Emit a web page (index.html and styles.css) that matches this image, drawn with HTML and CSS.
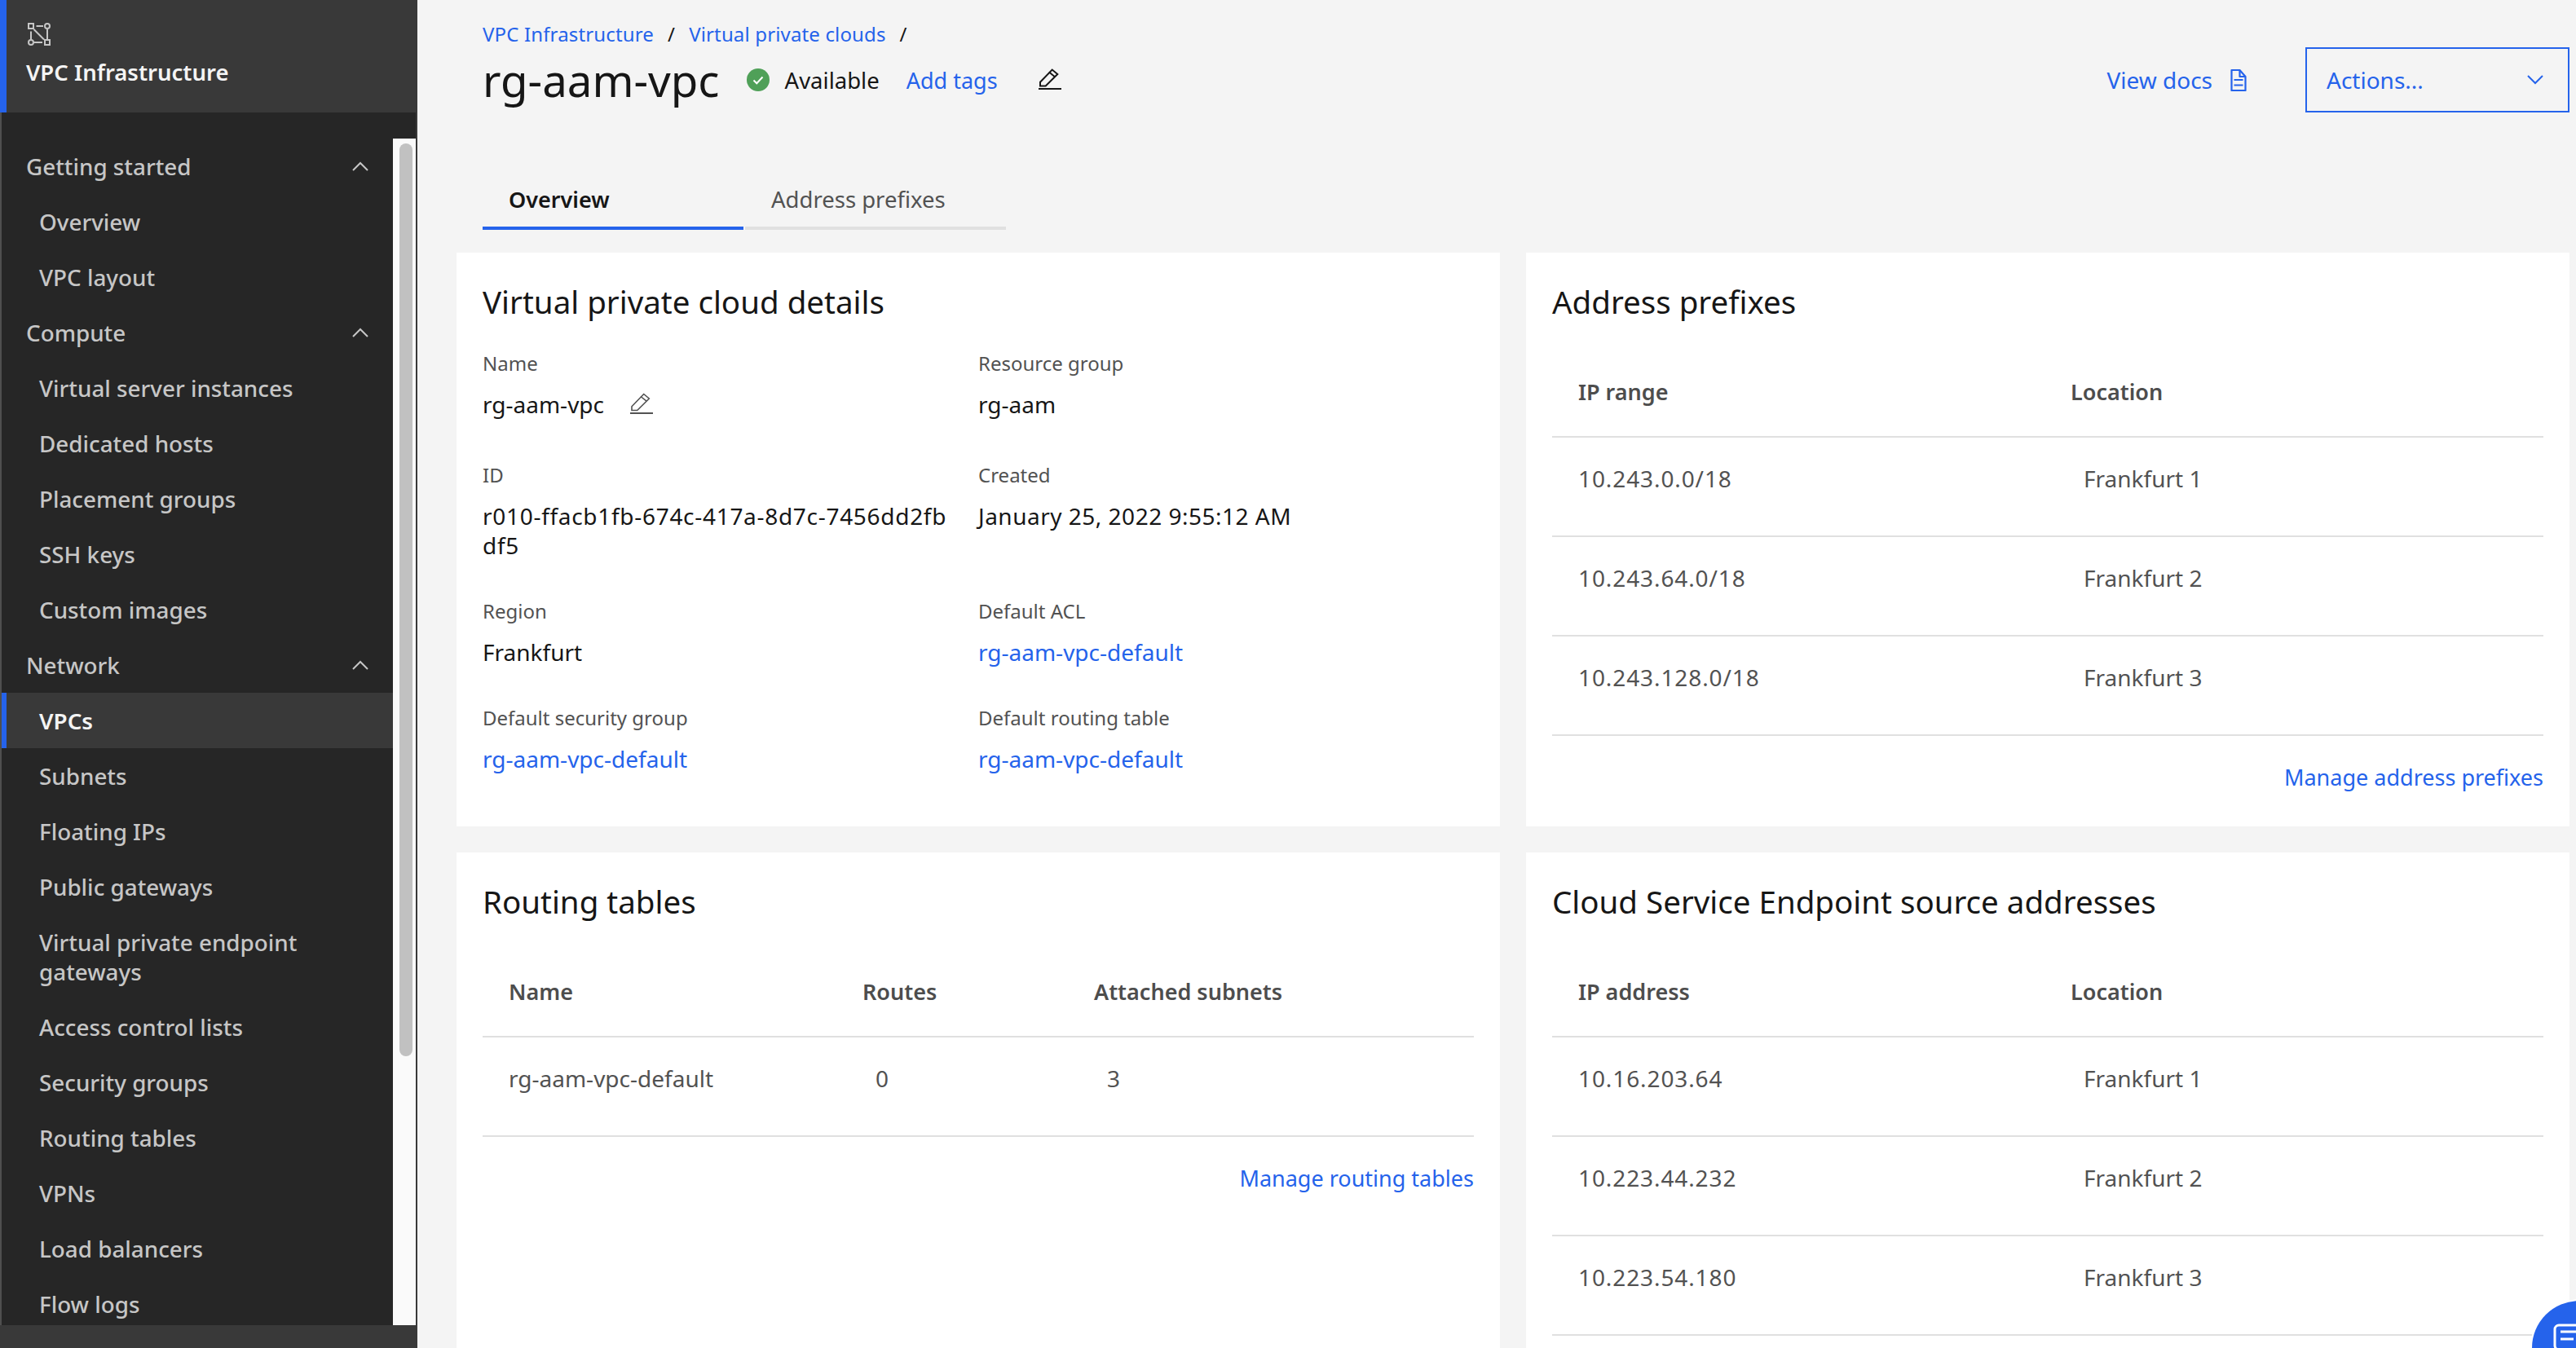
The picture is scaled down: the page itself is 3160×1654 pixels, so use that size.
FILE: index.html
```html
<!DOCTYPE html>
<html lang="en">
<head>
    <meta charset="UTF-8">
    <title>rg-aam-vpc</title>
    <link rel="stylesheet" href="styles.css">
</head>
<body>
    <aside class="sidebar">
        <header class="side-head">
            <svg class="side-logo" viewBox="0 0 28 28" width="28" height="28" fill="none" stroke="#c6c6c6" stroke-width="2">
                <rect x="1" y="1" width="6" height="6"/><rect x="21" y="21" width="6" height="6"/>
                <circle cx="24" cy="4" r="3"/><circle cx="4" cy="24" r="3"/>
                <path d="M10.500 4H19M24 8v12M4 10.500V20M8 24h10M7.500 8L20 20.500"/>
            </svg>
            <div class="side-title">VPC Infrastructure</div>
        </header>
        <div class="side-body">
            <nav class="side-nav">
                <div class="nav-group">Getting started <svg class="chev" viewBox="0 0 20 12" width="20" height="12"><path d="M1 11l9-9 9 9" fill="none" stroke="#c6c6c6" stroke-width="2"/></svg></div>
                <a class="nav-item">Overview</a>
                <a class="nav-item">VPC layout</a>
                <div class="nav-group">Compute <svg class="chev" viewBox="0 0 20 12" width="20" height="12"><path d="M1 11l9-9 9 9" fill="none" stroke="#c6c6c6" stroke-width="2"/></svg></div>
                <a class="nav-item">Virtual server instances</a>
                <a class="nav-item">Dedicated hosts</a>
                <a class="nav-item">Placement groups</a>
                <a class="nav-item">SSH keys</a>
                <a class="nav-item">Custom images</a>
                <div class="nav-group">Network <svg class="chev" viewBox="0 0 20 12" width="20" height="12"><path d="M1 11l9-9 9 9" fill="none" stroke="#c6c6c6" stroke-width="2"/></svg></div>
                <a class="nav-item active">VPCs</a>
                <a class="nav-item">Subnets</a>
                <a class="nav-item">Floating IPs</a>
                <a class="nav-item">Public gateways</a>
                <a class="nav-item">Virtual private endpoint gateways</a>
                <a class="nav-item">Access control lists</a>
                <a class="nav-item">Security groups</a>
                <a class="nav-item">Routing tables</a>
                <a class="nav-item">VPNs</a>
                <a class="nav-item">Load balancers</a>
                <a class="nav-item">Flow logs</a>
            </nav>
            <div class="scroll-track"><div class="scroll-thumb"></div></div>
        </div>
        <div class="side-foot"></div>
    </aside>

    <main class="content">
        <div class="page-head">
            <div>
                <div class="crumbs">
                    <a>VPC Infrastructure</a><span class="sep">/</span><a>Virtual private clouds</a><span class="sep">/</span>
                </div>
                <div class="title-row">
                    <h1>rg-aam-vpc</h1>
                    <svg class="status-icon" viewBox="0 0 28 28" width="28" height="28"><circle cx="14" cy="14" r="14" fill="#4fa058"/><path d="M8.500 14.500l3.800 3.800L19.500 10.500" fill="none" stroke="#fff" stroke-width="2"/></svg>
                    <span class="status-text">Available</span>
                    <a class="add-tags">Add tags</a>
                    <svg class="edit-icon" viewBox="0 0 28 28" width="28" height="28" fill="none" stroke="#161616" stroke-width="2"><path d="M2 21.500V16.700L16.700 1.500l6.600 5.500L8.700 21.500z"/><path d="M13 4.500l7 5.700"/><path d="M0 25h28"/></svg>
                </div>
            </div>
            <div class="head-actions">
                <a class="docs-link">View docs
                    <svg viewBox="0 0 20 28" width="20" height="28" fill="none" stroke="#2563eb" stroke-width="2.200" stroke-linejoin="round"><path d="M1.500 2h10l7 8v17h-17z"/><path d="M11.500 2v8h7M4.500 14h11M4.500 20.500h11"/></svg>
                </a>
                <div class="actions-btn">Actions...
                    <svg viewBox="0 0 20 12" width="20" height="12"><path d="M1 1l9 9 9-9" fill="none" stroke="#2563eb" stroke-width="2"/></svg>
                </div>
            </div>
        </div>

        <div class="tabs">
            <div class="tab selected">Overview</div>
            <div class="tab">Address prefixes</div>
        </div>

        <div class="cards">
            <section class="card">
                <h2>Virtual private cloud details</h2>
                <div class="details">
                    <div class="field"><div class="field-label">Name</div><div class="field-value with-icon">rg-aam-vpc
                        <svg viewBox="0 0 28 28" width="28" height="28" fill="none" stroke="#525252" stroke-width="1.600"><path d="M2 21.500V16.700L16.700 1.500l6.600 5.500L8.700 21.500z"/><path d="M13 4.500l7 5.700"/><path d="M0 25h28" stroke-width="2"/></svg></div></div>
                    <div class="field"><div class="field-label">Resource group</div><div class="field-value with-icon">rg-aam</div></div>
                    <div class="field"><div class="field-label">ID</div><div class="field-value spaced">r010-ffacb1fb-674c-417a-8d7c-7456dd2fb<br>df5</div></div>
                    <div class="field"><div class="field-label">Created</div><div class="field-value spaced-date">January 25, 2022 9:55:12 AM</div></div>
                    <div class="field"><div class="field-label">Region</div><div class="field-value">Frankfurt</div></div>
                    <div class="field"><div class="field-label">Default ACL</div><div class="field-value"><a>rg-aam-vpc-default</a></div></div>
                    <div class="field"><div class="field-label">Default security group</div><div class="field-value"><a>rg-aam-vpc-default</a></div></div>
                    <div class="field"><div class="field-label">Default routing table</div><div class="field-value"><a>rg-aam-vpc-default</a></div></div>
                </div>
            </section>

            <section class="card">
                <h2>Address prefixes</h2>
                <table class="data-table loc-table">
                    <thead><tr><th>IP range</th><th>Location</th></tr></thead>
                    <tbody>
                        <tr><td>10.243.0.0/18</td><td class="inset">Frankfurt 1</td></tr>
                        <tr><td>10.243.64.0/18</td><td class="inset">Frankfurt 2</td></tr>
                        <tr><td>10.243.128.0/18</td><td class="inset">Frankfurt 3</td></tr>
                    </tbody>
                </table>
                <div class="manage"><a>Manage address prefixes</a></div>
            </section>

            <section class="card">
                <h2>Routing tables</h2>
                <table class="data-table routes-table">
                    <thead><tr><th>Name</th><th>Routes</th><th>Attached subnets</th></tr></thead>
                    <tbody>
                        <tr><td>rg-aam-vpc-default</td><td class="inset">0</td><td class="inset">3</td></tr>
                    </tbody>
                </table>
                <div class="manage"><a>Manage routing tables</a></div>
            </section>

            <section class="card">
                <h2>Cloud Service Endpoint source addresses</h2>
                <table class="data-table loc-table">
                    <thead><tr><th>IP address</th><th>Location</th></tr></thead>
                    <tbody>
                        <tr><td>10.16.203.64</td><td class="inset">Frankfurt 1</td></tr>
                        <tr><td>10.223.44.232</td><td class="inset">Frankfurt 2</td></tr>
                        <tr><td>10.223.54.180</td><td class="inset">Frankfurt 3</td></tr>
                    </tbody>
                </table>
            </section>
        </div>
    </main>

    <button class="chat-btn">
        <svg viewBox="0 0 44 44" width="44" height="44" fill="none" stroke="#fff" stroke-width="3"><path d="M7 2h32a5 5 0 0 1 5 5v20a5 5 0 0 1-5 5H26l-4 6-4-6H7a5 5 0 0 1-5-5V7a5 5 0 0 1 5-5z"/><path d="M9 10h28M9 19h16"/></svg>
    </button>
</body>
</html>
```

FILE: styles.css
```css
/* Page */
html {
    height: 100%;
    overflow: hidden;
}

body {
    position: relative;
    margin: 0;
    display: flex;
    height: 1654px;
    overflow: hidden;
    background-color: #f4f4f4;
    color: #161616;
    font-family: "Noto Sans", Roboto, sans-serif;
    font-size: 28px;
}

a {
    color: #2563eb;
    text-decoration: none;
}

/* Sidebar */
.sidebar {
    width: 512px;
    height: 1654px;
    flex: none;
    display: flex;
    flex-direction: column;
    background-color: #262626;
}

.side-head {
    height: 138px;
    flex: none;
    box-sizing: border-box;
    padding: 28px 0 0 26px;
    border-left: 8px solid #2563eb;
    background-color: #393939;
}

.side-logo {
    display: block;
}

.side-title {
    margin: 15px 0 0 -2px;
    color: #f4f4f4;
    font-size: 27.500px;
    font-weight: 600;
    line-height: 36px;
}

.side-body {
    flex: 1;
    min-height: 0;
    display: flex;
    border-left: 2px solid #4f4f4f;
    padding-right: 2px;
    background-color: #393939;
}

.side-nav {
    flex: 1;
    padding-top: 32px;
    overflow: hidden;
    background-color: #262626;
}

.nav-group, .nav-item {
    display: block;
    color: #c6c6c6;
    font-size: 27.800px;
    font-weight: 500;
    line-height: 36px;
    padding: 16px 0;
}

.nav-group {
    padding-left: 30px;
    padding-right: 30px;
    display: flex;
    justify-content: space-between;
    align-items: center;
}

.nav-item {
    padding-left: 46px;
    padding-right: 60px;
}

.nav-item.active {
    background-color: #393939;
    border-left: 6px solid #2563eb;
    padding-left: 40px;
    color: #f4f4f4;
    font-weight: 600;
}

.scroll-track {
    width: 28px;
    flex: none;
    border-top: 32px solid #262626;
    background-color: #fafafa;
}

.scroll-thumb {
    width: 16px;
    height: 1120px;
    margin: 6px 0 0 8px;
    border-radius: 8px;
    background-color: #c1c1c1;
}

.side-foot {
    height: 28px;
    flex: none;
    background-color: #393939;
}

/* Main area */
.content {
    flex: 1;
    min-width: 0;
    height: 1654px;
    overflow: hidden;
    padding: 0 8px 0 48px;
}

.page-head {
    display: flex;
    justify-content: space-between;
    padding-left: 32px;
    height: 230px;
}

.crumbs {
    padding-top: 24px;
    font-size: 24px;
    line-height: 36px;
    letter-spacing: 0.150px;
}

.sep {
    margin: 0 17px;
    color: #161616;
}

.title-row {
    display: flex;
    align-items: center;
    margin-top: 2px;
    height: 72px;
}

h1 {
    margin: 0 33px 0 0;
    font-size: 54.600px;
    font-weight: 400;
}

.status-text {
    margin-left: 19px;
    font-size: 27.500px;
}

.add-tags {
    margin-left: 33px;
    font-size: 27px;
}

.edit-icon {
    margin-left: 50px;
}

.head-actions {
    display: flex;
    align-items: flex-start;
    padding-top: 58px;
}

.docs-link {
    display: flex;
    align-items: center;
    gap: 22px;
    height: 80px;
    margin-right: 72px;
}

.actions-btn {
    width: 324px;
    height: 80px;
    box-sizing: border-box;
    padding: 0 30px 0 24px;
    display: flex;
    align-items: center;
    justify-content: space-between;
    border: 2px solid #2563eb;
    color: #2563eb;
}

/* Tabs */
.tabs {
    display: flex;
    gap: 2px;
    margin-left: 32px;
    height: 52px;
}

.tab {
    width: 320px;
    box-sizing: border-box;
    padding: 0 32px;
    height: 52px;
    line-height: 29px;
    font-size: 27.500px;
    color: #525252;
    border-bottom: 4px solid #e0e0e0;
}

.tab.selected {
    color: #161616;
    font-size: 27px;
    font-weight: 600;
    border-bottom-color: #2563eb;
}

/* Cards */
.cards {
    display: grid;
    grid-template-columns: 1280px 1280px;
    gap: 32px;
    margin-top: 28px;
}

.card {
    background-color: #fff;
    padding: 32px;
    height: 704px;
    box-sizing: border-box;
}

h2 {
    margin: 2px 0 0;
    font-size: 38.500px;
    font-weight: 400;
    line-height: 52px;
}

.details {
    display: grid;
    grid-template-columns: 576px 1fr;
    column-gap: 32px;
    margin-top: 32px;
}

.field {
    margin-bottom: 45px;
}

.field-label {
    color: #525252;
    font-size: 24px;
    line-height: 36px;
    margin-bottom: 14px;
}

.field-value {
    line-height: 36px;
}

.field-value.with-icon {
    display: flex;
    align-items: flex-start;
    gap: 32px;
    min-height: 42px;
}

.field-value.with-icon svg {
    margin-top: 4px;
}

.field-value.spaced {
    letter-spacing: 0.700px;
}

.field-value.spaced-date {
    letter-spacing: 0.500px;
}

.data-table {
    width: 100%;
    border-collapse: collapse;
    margin-top: 30px;
}

.data-table th {
    box-sizing: border-box;
    height: 110px;
    padding: 0 32px;
    text-align: left;
    font-size: 27px;
    font-weight: 600;
    color: #4d4d4d;
    border-bottom: 2px solid #e0e0e0;
}

.data-table td {
    box-sizing: border-box;
    height: 122px;
    padding: 32px 32px 0;
    vertical-align: top;
    line-height: 36px;
    color: #525252;
    border-bottom: 2px solid #e0e0e0;
}

.data-table td.inset {
    padding-left: 48px;
}

.loc-table td:first-child {
    letter-spacing: 0.900px;
}

.loc-table th:first-child {
    width: 604px;
}

.routes-table th:first-child {
    width: 434px;
}

.routes-table th:nth-child(2) {
    width: 284px;
}

.manage {
    margin-top: 33px;
    line-height: 36px;
    font-size: 27px;
    text-align: right;
}

/* Chat button */
.chat-btn {
    position: absolute;
    left: 3106px;
    top: 1596px;
    width: 116px;
    height: 116px;
    padding: 28px 0 0 26px;
    display: flex;
    align-items: flex-start;
    border: 0;
    border-radius: 50%;
    background-color: #2563eb;
    box-shadow: 0 0 0 2px #fff;
}
```
